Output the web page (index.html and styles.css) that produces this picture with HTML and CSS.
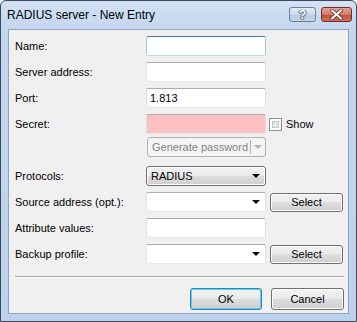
FILE: index.html
```html
<!DOCTYPE html>
<html lang="en">
<head>
  <meta charset="UTF-8" />
  <title>RADIUS server - New Entry</title>
  <link rel="stylesheet" href="styles.css">
</head>
<body>
  <div class="window">
    <div class="titlebar">
      <div class="title">RADIUS server - New Entry</div>
      <div class="caption-buttons">
        <div class="cap help">?</div>
        <div class="cap close">
          <svg width="13" height="11" viewBox="0 0 13 11">
            <path d="M2 1.5 L11 9.5 M11 1.5 L2 9.5" stroke="#5a1d1d" stroke-width="3.6" stroke-linecap="round"/>
            <path d="M2 1.5 L11 9.5 M11 1.5 L2 9.5" stroke="#fff" stroke-width="2.2" stroke-linecap="round"/>
          </svg>
        </div>
      </div>
    </div>

    <div class="client">
      <div class="form">
        <label>Name:</label>
        <div class="edit focus"></div>
        <div></div>

        <label>Server address:</label>
        <div class="edit"></div>
        <div></div>

        <label>Port:</label>
        <div class="edit">1.813</div>
        <div></div>

        <label>Secret:</label>
        <div class="edit secret"></div>
        <div class="check"><span class="box"></span>Show</div>

        <div></div>
        <div class="split disabled">
          <span class="split-text">Generate password</span>
          <span class="split-arrow"><span class="tri"></span></span>
        </div>
        <div></div>

        <label>Protocols:</label>
        <div class="btn combo-list">RADIUS<span class="tri"></span></div>
        <div></div>

        <label>Source address (opt.):</label>
        <div class="edit combo"><span class="tri"></span></div>
        <div class="btn select">Select</div>

        <label>Attribute values:</label>
        <div class="edit"></div>
        <div></div>

        <label>Backup profile:</label>
        <div class="edit combo"><span class="tri"></span></div>
        <div class="btn select">Select</div>
      </div>

      <div class="separator"></div>

      <div class="actions">
        <div class="btn default">OK</div>
        <div class="btn">Cancel</div>
      </div>
    </div>
  </div>
</body>
</html>
```

FILE: styles.css
```css
* {
  margin: 0;
  padding: 0;
  box-sizing: border-box;
}

body {
  font-family: 'Liberation Sans', Arial, sans-serif;
  font-size: 11px;
  color: #000;
  background: #fff;
}

.window {
  width: 357px;
  height: 322px;
  border: 1px solid #3a4a5e;
  border-radius: 6px 6px 0 0;
  background: linear-gradient(#d3e2f3 0px, #c2d6ee 28px, #bcd2ec 100%);
  display: flex;
  flex-direction: column;
  overflow: hidden;
}

.titlebar {
  height: 28px;
  display: flex;
  justify-content: space-between;
  align-items: flex-start;
  padding: 0 4px 0 6px;
}

.title {
  font-size: 12px;
  padding-top: 7px;
  color: #000;
}

.caption-buttons {
  display: flex;
  gap: 5px;
  padding-top: 6px;
}

.cap {
  height: 15px;
  border: 1px solid #6b7c93;
  border-radius: 3px;
  display: flex;
  align-items: center;
  justify-content: center;
}

.help {
  width: 27px;
  background: linear-gradient(#e3ecf6 0%, #cad9ea 50%, #b4c8df 51%, #c4d6eb 100%);
  color: #fff;
  font-weight: bold;
  font-size: 13px;
  text-shadow: 0 0 1px #3a4a5e, 1px 0 0 #5d6f88, -1px 0 0 #5d6f88, 0 1px 0 #5d6f88;
}

.close {
  width: 31px;
  border-color: #6e2b2b;
  background: linear-gradient(#e8a493 0%, #d47a68 50%, #c24a36 51%, #d46d5a 100%);
}

.client {
  flex: 1;
  margin: 0 7px 7px 7px;
  background: #f0f0f0;
  border: 1px solid #8ea3bf;
  padding: 6px 5px 0 5px;
}

.form {
  display: grid;
  grid-template-columns: 128px 120px 73px;
  grid-auto-rows: 20px;
  row-gap: 6px;
  column-gap: 4px;
  align-items: center;
}

label {
  padding-left: 1px;
  color: #000;
}

.edit {
  height: 20px;
  background: #fff;
  border: 1px solid #dbdfe6;
  border-top-color: #abadb3;
  border-bottom-color: #e3e9ef;
  border-radius: 2px;
  padding: 0 3px;
  line-height: 18px;
  position: relative;
}

.edit.focus {
  border-color: #a4c9e3;
  border-top-color: #3d7bad;
  border-bottom-color: #b7d9ed;
}

.edit.secret {
  background: #ffc0c0;
}

.tri {
  display: inline-block;
  width: 0;
  height: 0;
  border-left: 4px solid transparent;
  border-right: 4px solid transparent;
  border-top: 4px solid #000;
}

.edit.combo .tri {
  position: absolute;
  right: 5px;
  top: 7px;
}

.check {
  display: flex;
  align-items: center;
  gap: 4px;
  margin-left: -1px;
}

.box {
  width: 13px;
  height: 13px;
  border: 1px solid #8e8f8f;
  background: linear-gradient(135deg, #dcdcdc, #f4f4f4);
  box-shadow: inset 0 0 0 2px #fff, inset 0 0 0 3px #c5c5c5;
}

.split {
  align-self: start;
  margin: -3px 0 0 1px;
  height: 20px;
  border: 1px solid #adb2b5;
  border-radius: 3px;
  background: #f4f4f4;
  color: #838383;
  display: flex;
  align-items: center;
  white-space: nowrap;
}

.split-text {
  flex: 1;
  padding-left: 4px;
}

.split-arrow {
  width: 15px;
  height: 14px;
  border-left: 1px solid #adb2b5;
  display: flex;
  align-items: center;
  justify-content: center;
}

.split-arrow .tri {
  border-top-color: #adb2b5;
}

.btn {
  height: 20px;
  border: 1px solid #707070;
  border-radius: 3px;
  background: linear-gradient(#f2f2f2 0%, #ebebeb 49%, #dddddd 50%, #cfcfcf 100%);
  box-shadow: inset 0 0 0 1px #fcfcfc;
  display: flex;
  align-items: center;
  justify-content: center;
}

.btn.combo-list {
  justify-content: space-between;
  padding: 0 5px 0 4px;
}

.btn.select {
  height: 19px;
}

.separator {
  height: 2px;
  margin: 12px 0 0 1px;
  width: 329px;
  border-top: 1px solid #a0a0a0;
  border-bottom: 1px solid #fff;
}

.actions {
  display: flex;
  justify-content: flex-end;
  gap: 9px;
  padding: 10px 0 0 0;
  width: 330px;
}

.actions .btn {
  width: 73px;
  height: 22px;
}

.actions .btn.default {
  width: 72px;
  border-color: #3c7fb1;
  box-shadow: inset 0 0 0 1px #48d8fb;
}
```
